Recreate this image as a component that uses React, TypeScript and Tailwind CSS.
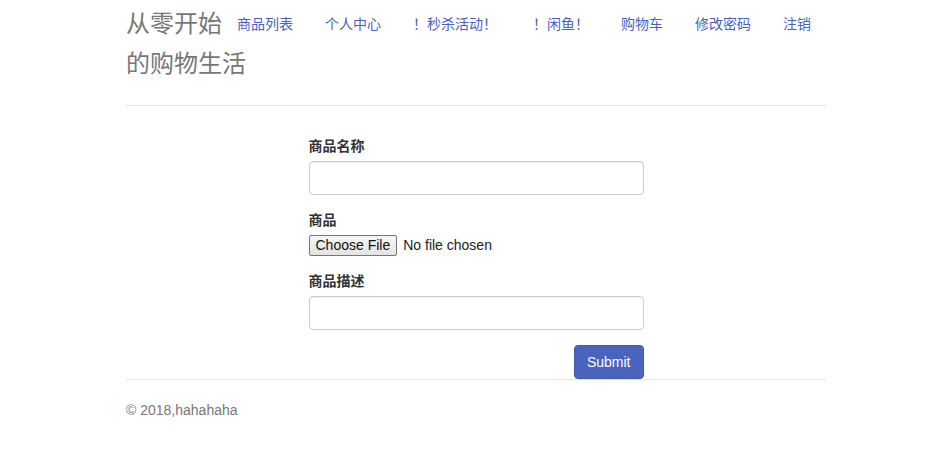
const font = { fontFamily: '"Liberation Sans", "Noto Sans CJK SC", sans-serif' };

const links = [
    { label: "商品列表", cls: "px-4" },
    { label: "个人中心", cls: "px-4" },
    { label: "！秒杀活动！", cls: "pl-4 pr-[20px]" },
    { label: "！闲鱼！", cls: "px-4" },
    { label: "购物车", cls: "px-4" },
    { label: "修改密码", cls: "px-4" },
    { label: "注销", cls: "px-4" },
];

function Field({ label, children }: { label: string; children: React.ReactNode }) {
    return (
        <div className="mb-[15px]">
            <label className="block mb-[5px] text-[14px] leading-[20px] font-bold text-[#333]">{label}</label>
            {children}
        </div>
    );
}

export default function App() {
    return (
        <div className="bg-white" style={font}>
            <div className="w-[700px] ml-[126px]">
                <header className="flex items-start pt-[4px] pb-[21px] border-b border-[#e5e5e5]">
                    <a className="block w-[95px] shrink-0 text-[24px] leading-[40px] text-[#777] whitespace-nowrap">
                        <span className="block">从零开始</span>
                        <span className="block">的购物生活</span>
                    </a>
                    <nav className="flex pt-[10px]">
                        {links.map((l) => (
                            <a key={l.label} className={`block ${l.cls} text-[14px] leading-[20px] text-[#4a5fc0] whitespace-nowrap`}>
                                {l.label}
                            </a>
                        ))}
                    </nav>
                </header>

                <form className="w-[335px] mx-auto pt-[30px]">
                    <Field label="商品名称">
                        <input
                            type="text"
                            className="block w-full h-[34px] px-3 border border-[#ccc] rounded-[4px] text-[14px] shadow-[inset_0_1px_1px_rgba(0,0,0,0.075)]"
                        />
                    </Field>
                    <Field label="商品">
                        <input
                            type="file"
                            className="block h-[21px] text-[14px] leading-[19px] text-[#222] file:h-[21px] file:mr-[6px] file:px-[6px] file:py-[0px] file:border file:border-[#767676] file:rounded-[2px] file:bg-[#efefef] file:bg-gradient-to-b file:from-[#f6f6f6] file:to-[#e3e3e3] file:text-[#111]"
                        />
                    </Field>
                    <Field label="商品描述">
                        <input
                            type="text"
                            className="block w-full h-[34px] px-3 border border-[#ccc] rounded-[4px] text-[14px] shadow-[inset_0_1px_1px_rgba(0,0,0,0.075)]"
                        />
                    </Field>
                    <div className="flex justify-end">
                        <button
                            type="button"
                            className="h-[34px] px-3 rounded-[4px] bg-[#4a63bd] border border-[#4158ad] text-white text-[14px]"
                        >
                            Submit
                        </button>
                    </div>
                </form>

                <footer className="border-t border-[#e5e5e5] pt-[20px]">
                    <p className="text-[14px] leading-[20px] text-[#777]">© 2018,hahahaha</p>
                </footer>
            </div>
        </div>
    );
}
